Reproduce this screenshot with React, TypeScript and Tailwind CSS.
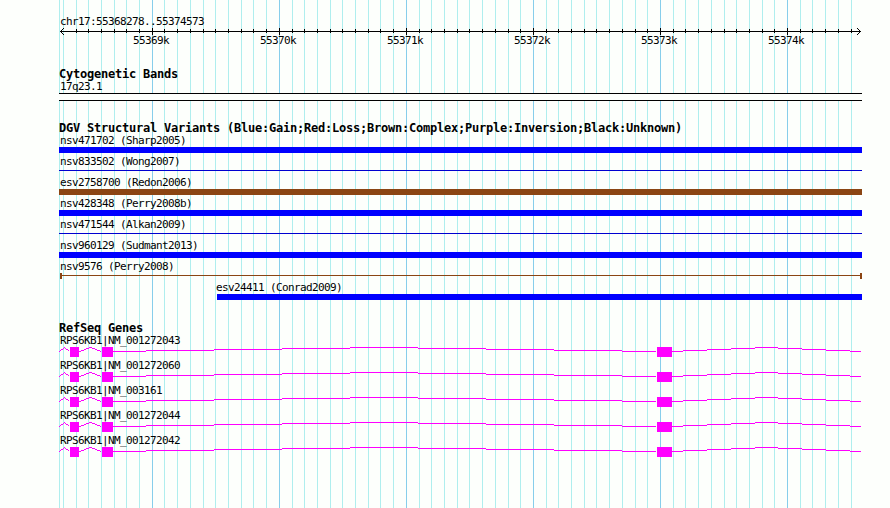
import type { ReactNode } from 'react'

const variants = [
  { name: 'nsv471702 (Sharp2005)', kind: 'gain' },
  { name: 'nsv833502 (Wong2007)', kind: 'gainLine' },
  { name: 'esv2758700 (Redon2006)', kind: 'complex' },
  { name: 'nsv428348 (Perry2008b)', kind: 'gain' },
  { name: 'nsv471544 (Alkan2009)', kind: 'gainLine' },
  { name: 'nsv960129 (Sudmant2013)', kind: 'gain' },
  { name: 'nsv9576 (Perry2008)', kind: 'complexLine' },
  { name: 'esv24411 (Conrad2009)', kind: 'gainPartial' },
]

const genes = [
  'RPS6KB1|NM_001272043',
  'RPS6KB1|NM_001272060',
  'RPS6KB1|NM_003161',
  'RPS6KB1|NM_001272044',
  'RPS6KB1|NM_001272042',
]

// Tick columns, one per 100 bases, relative to the left edge of the panel
const ticks = Array.from({ length: 63 }, (_, i) => i - 7).map((n) => ({
  x: Math.floor(152.245 + 12.7065 * n) - 59,
  major: n % 10 === 0,
}))

const labels = ['55369k', '55370k', '55371k', '55372k', '55373k', '55374k']

const introns = [
  [0, 10],
  [20, 42],
  [53, 597],
  [612, 802],
]

// Hat shaped intron connector, drawn column by column
function intronPath(start: number, end: number) {
  const mid = (start + end) / 2
  let d = ''
  for (let x = start; x < end; x++) {
    const rise = 4 * (1 - Math.abs(x - mid) / (mid - start))
    // half steps go up on the left side and down on the right
    const level = x < mid ? Math.round(rise) : Math.ceil(rise - 0.5)
    d += `M${x} ${4 - level}h1v1h-1z`
  }
  return d
}

const genePath = introns.map(([a, b]) => intronPath(a, b)).join('')

function Grid() {
  return (
    <svg className="absolute left-[59px] top-0" width="803" height="508" shapeRendering="crispEdges">
      <rect x="0" y="0" width="1" height="508" fill="#afeeee" />
      {ticks.map((t) => (
        <rect key={t.x} x={t.x} y="0" width="1" height="508" fill={t.major ? '#87ceeb' : '#afeeee'} />
      ))}
    </svg>
  )
}

function Heading({ children }: { children: ReactNode }) {
  return <h2 className="h-[13px] text-[12px] leading-[13px] font-bold tracking-[-0.224px]">{children}</h2>
}

function Label({ children }: { children: ReactNode }) {
  return <div className="h-[11px] pl-px text-[11px] leading-[11px] tracking-[-0.622px]">{children}</div>
}

function Ruler() {
  return (
    <>
      <svg className="block" width="803" height="8" shapeRendering="crispEdges">
        <rect x="1" y="4" width="801" height="1" />
        {ticks.slice(1).map((t) => (
          <rect key={t.x} x={t.x} y={t.major ? 1 : 2} width="1" height={t.major ? 7 : 4} />
        ))}
        <path d="M2 3h1v1h-1zM3 2h1v1h-1zM4 1h1v1h-1zM2 5h1v1h-1zM3 6h1v1h-1zM4 7h1v1h-1z" />
        <path d="M800 3h1v1h-1zM799 2h1v1h-1zM798 1h1v1h-1zM800 5h1v1h-1zM799 6h1v1h-1zM798 7h1v1h-1z" />
      </svg>
      <div className="flex gap-[91px] pl-[74px] text-[11px] leading-[11px] tracking-[-0.622px]">
        {labels.map((label) => (
          <span key={label} className="w-9 shrink-0">{label}</span>
        ))}
      </div>
    </>
  )
}

function VariantBar({ kind }: { kind: string }) {
  if (kind === 'gainLine') {
    return (
      <div className="h-1.5 pt-0.5">
        <div className="h-px bg-[#0000d0]" />
      </div>
    )
  }
  if (kind === 'complexLine') {
    return (
      <div className="ml-px flex h-1.5">
        <div className="w-0.5 bg-[#8b4513]" />
        <div className="mt-0.5 h-px flex-1 bg-[#8b4513]" />
        <div className="w-0.5 bg-[#8b4513]" />
      </div>
    )
  }
  return <div className={kind === 'complex' ? 'h-1.5 bg-[#8b4513]' : 'h-1.5 bg-[#0000ff]'} />
}

export default function App() {
  return (
    <main className="relative h-[508px] w-[890px] overflow-hidden bg-[#fdfffc] font-['DejaVu_Sans_Mono',monospace] text-black whitespace-pre">
      <Grid />
      <div className="relative ml-[59px] w-[803px] pt-4">
        {/* Overview ruler */}
        <section className="h-[52px]">
          <Label>chr17:55368278..55374573</Label>
          <Ruler />
        </section>

        {/* Cytogenetic bands */}
        <section className="h-[54px]">
          <Heading>Cytogenetic Bands</Heading>
          <Label>17q23.1</Label>
          <div className="mt-px h-2 border-y border-black bg-[#fdfffc]" />
        </section>

        {/* Structural variants */}
        <section className="h-[200px]">
          <Heading>DGV Structural Variants (Blue:Gain;Red:Loss;Brown:Complex;Purple:Inversion;Black:Unknown)</Heading>
          {variants.map((v) => (
            <div key={v.name} className={v.kind === 'gainPartial' ? 'ml-[158px] h-[21px]' : 'h-[21px]'}>
              <div className={v.kind === 'gainPartial' ? 'mb-px -ml-0.5' : 'mb-px'}>
                <Label>{v.name}</Label>
              </div>
              <VariantBar kind={v.kind} />
            </div>
          ))}
        </section>

        {/* Genes */}
        <section>
          <Heading>RefSeq Genes</Heading>
          {genes.map((gene) => (
            <div key={gene} className="h-[25px]">
              <Label>{gene}</Label>
              <svg className="mt-px block" width="803" height="11" fill="#ff00ff" shapeRendering="crispEdges">
                <path d={genePath} />
                <rect x="11" y="0" width="9" height="10" />
                <rect x="43" y="0" width="11" height="10" />
                <rect x="598" y="0" width="15" height="10" />
              </svg>
            </div>
          ))}
        </section>
      </div>
    </main>
  )
}
